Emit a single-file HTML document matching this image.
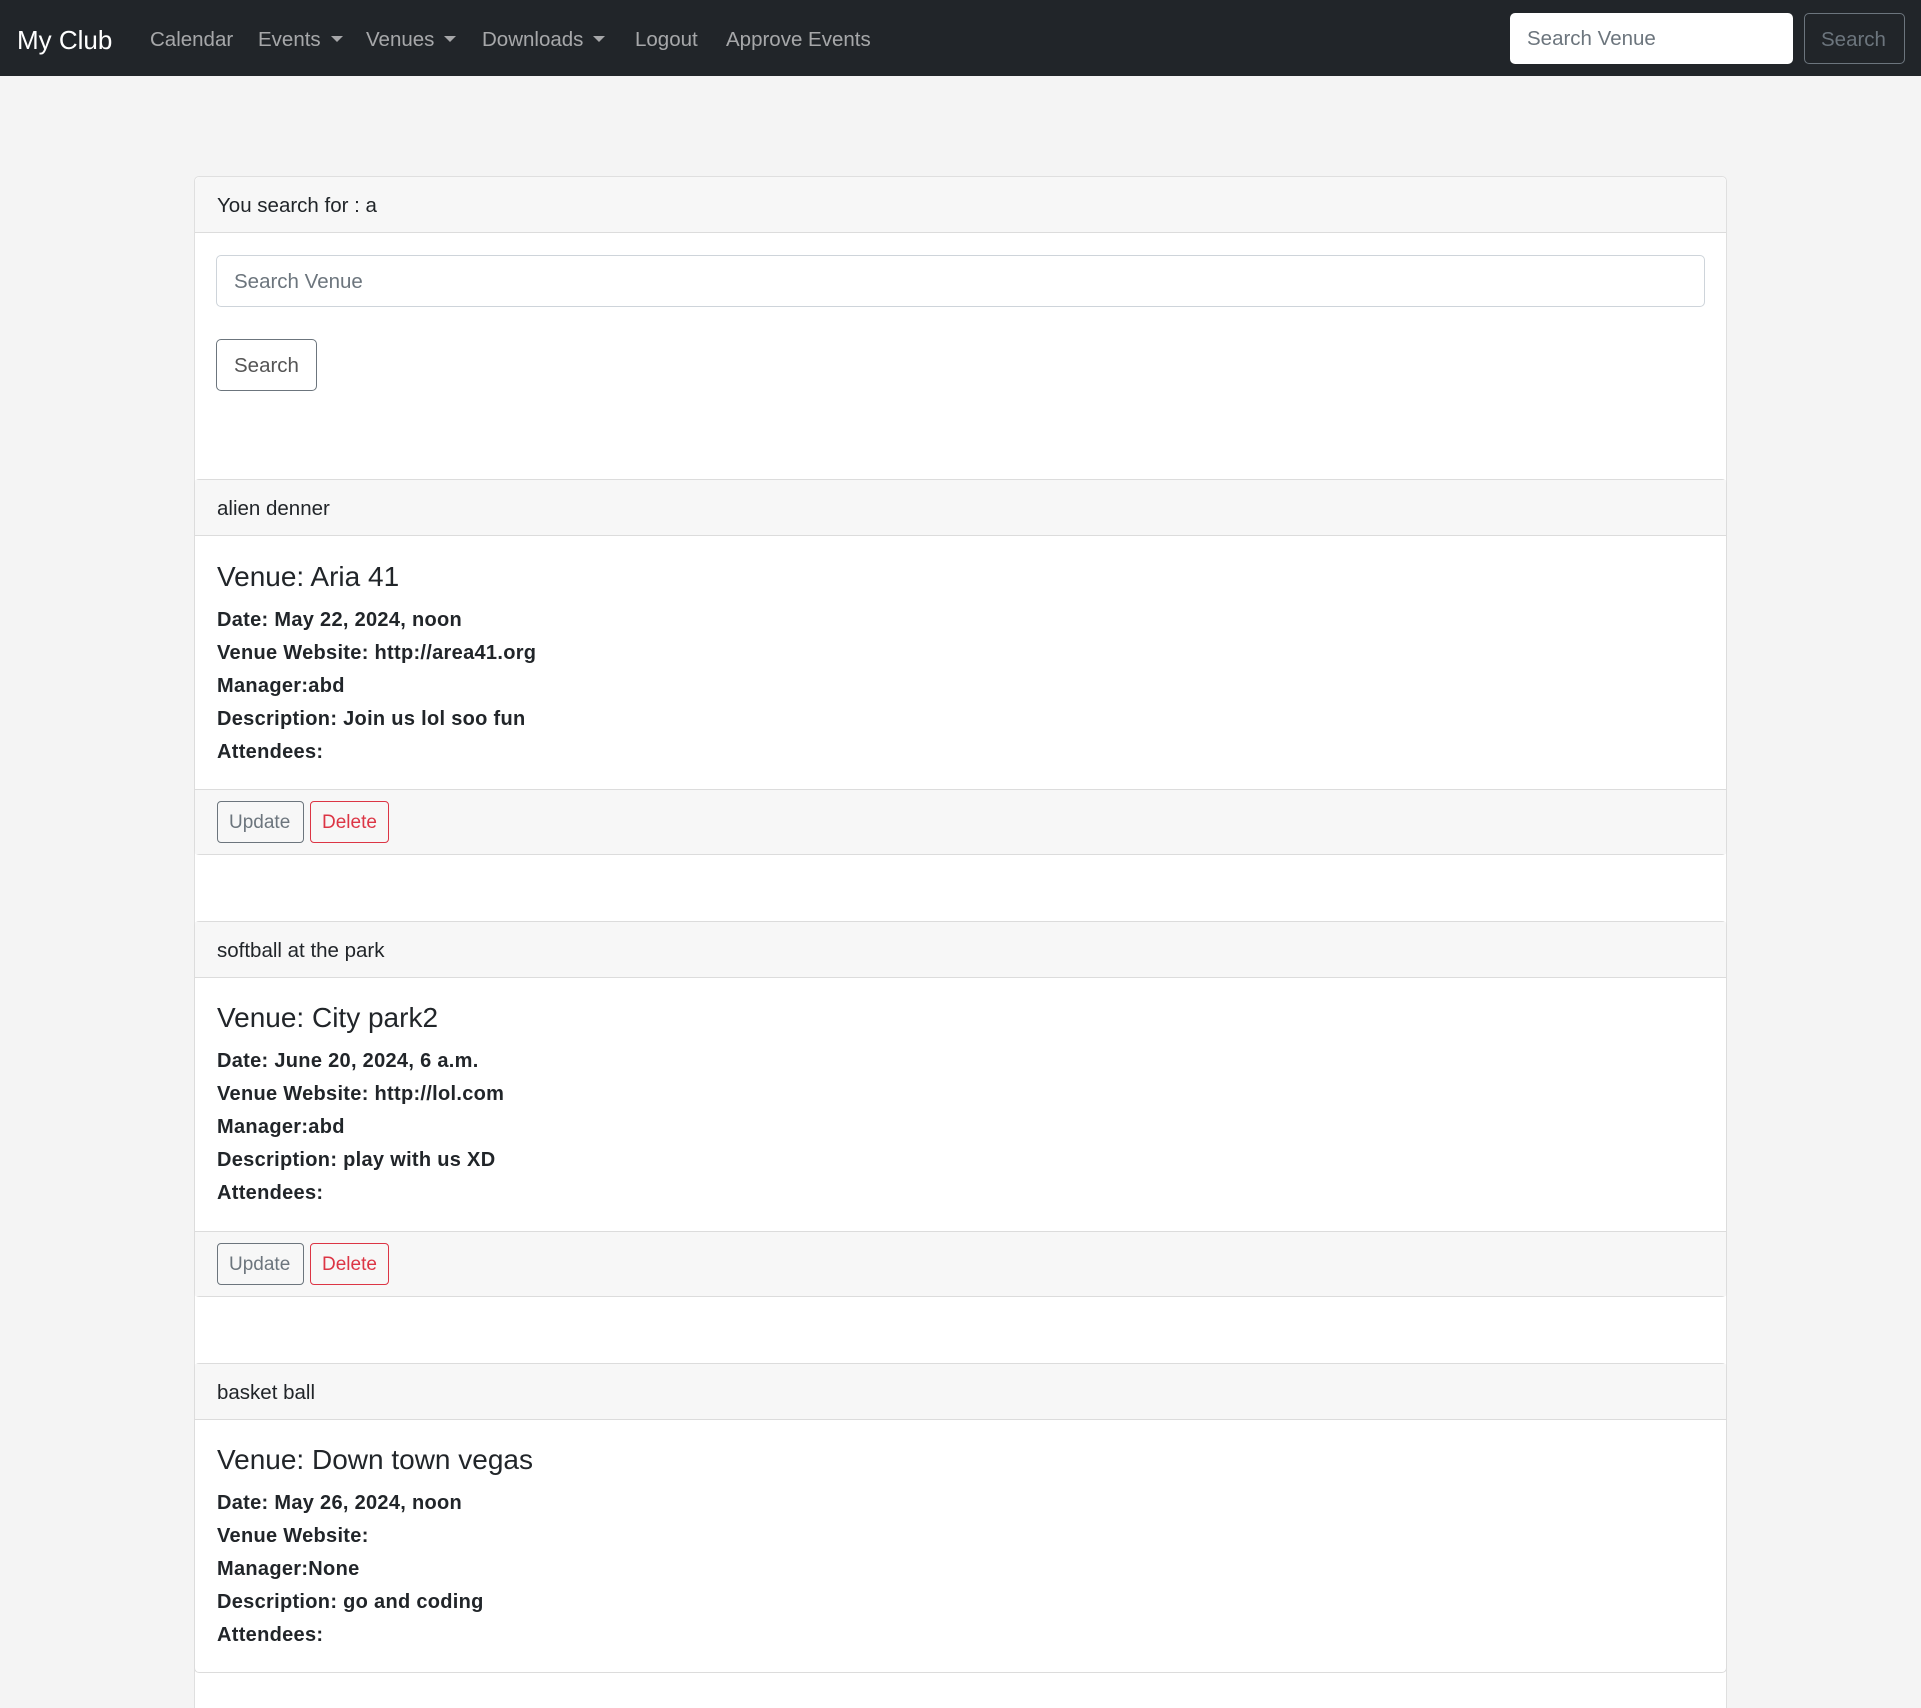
<!DOCTYPE html>
<html style="width:1921px;height:1708px;overflow:hidden"><head><meta charset="utf-8"><style>
*{box-sizing:border-box;margin:0;padding:0}
body{width:1921px;height:1708px;background:#f4f4f4;font-family:"Liberation Sans",sans-serif;color:#212529;position:relative;overflow:hidden;font-size:19.6px}
.nav{position:absolute;left:0;top:0;width:1921px;height:76px;background:#212529}
.nav span{position:absolute;top:28px;color:rgba(255,255,255,.6);font-size:20.5px;white-space:nowrap}
.nav .brand{color:#fff;font-size:26px;top:25px;left:17px}
.caret{display:inline-block;margin-left:10px;vertical-align:4px;border-top:6px solid rgba(255,255,255,.6);border-left:6px solid transparent;border-right:6px solid transparent}
.ninput{position:absolute;left:1510px;top:13px;width:283px;height:51px;background:#fff;border-radius:5px;color:#6c757d;font-size:20.5px;padding:14px 17px}
.nbtn{position:absolute;left:1804px;top:13px;width:101px;height:51px;border:1px solid #6c757d;border-radius:5px;color:#6c757d;font-size:20.5px;padding:14px 16px}
.outer{position:absolute;left:194px;top:176px;width:1533px;height:1560px;background:#fff;border:1px solid #dfdfdf;border-radius:5px}
.hdr{position:absolute;left:0;right:0;background:#f7f7f7;border-bottom:1px solid #dcdcdc;padding-left:22px;font-size:20.5px}
.card{position:absolute;left:194px;width:1533px;border:1px solid #dcdcdc;border-radius:5px;background:#fff}
.abs{position:absolute}
.title{font-size:28px;left:22px}
.b{font-weight:bold;left:22px;font-size:20px;white-space:nowrap;letter-spacing:.3px}
.btn{position:absolute;top:11px;height:42px;border-radius:4px;font-size:19px;padding:10px 11px;background:#f7f7f7}
</style></head><body>
<div class="nav">
<span class="brand">My Club</span>
<span style="left:150px">Calendar</span>
<span style="left:258px">Events<i class="caret"></i></span>
<span style="left:366px">Venues<i class="caret"></i></span>
<span style="left:482px">Downloads<i class="caret"></i></span>
<span style="left:635px">Logout</span>
<span style="left:726px">Approve Events</span>
<div class="ninput">Search Venue</div>
<div class="nbtn">Search</div>
</div>

<div class="outer">
<div class="hdr" style="top:0;height:56px;line-height:58px;border-radius:5px 5px 0 0">You search for : a</div>
<div class="abs" style="left:21px;top:78px;width:1489px;height:52px;border:1px solid #ced4da;border-radius:5px;color:#6c757d;font-size:20.5px;padding:14px 17px">Search Venue</div>
<div class="abs" style="left:21px;top:162px;width:101px;height:52px;border:1px solid #6c757d;border-radius:5px;color:#555;font-size:20.5px;padding:14px 17px">Search</div>
</div>

<div class="card" style="top:479px;height:376px">
<div class="hdr" style="top:0;height:56px;line-height:58px">alien denner</div>
<div class="abs title" style="top:81px">Venue: Aria 41</div>
<div class="abs b" style="top:129px">Date: May 22, 2024, noon</div>
<div class="abs b" style="top:162px">Venue Website: http://area41.org</div>
<div class="abs b" style="top:195px">Manager:abd</div>
<div class="abs b" style="top:228px">Description: Join us lol soo fun</div>
<div class="abs b" style="top:261px">Attendees:</div>
<div class="abs" style="left:0;right:0;top:309px;bottom:0;background:#f7f7f7;border-top:1px solid #dcdcdc">
<div class="btn" style="left:22px;width:87px;border:1px solid #6c757d;color:#6c757d">Update</div>
<div class="btn" style="left:115px;width:79px;border:1px solid #dc3545;color:#dc3545">Delete</div>
</div></div>

<div class="card" style="top:921px;height:376px">
<div class="hdr" style="top:0;height:56px;line-height:58px">softball at the park</div>
<div class="abs title" style="top:80px">Venue: City park2</div>
<div class="abs b" style="top:128px">Date: June 20, 2024, 6 a.m.</div>
<div class="abs b" style="top:161px">Venue Website: http://lol.com</div>
<div class="abs b" style="top:194px">Manager:abd</div>
<div class="abs b" style="top:227px">Description: play with us XD</div>
<div class="abs b" style="top:260px">Attendees:</div>
<div class="abs" style="left:0;right:0;top:309px;bottom:0;background:#f7f7f7;border-top:1px solid #dcdcdc">
<div class="btn" style="left:22px;width:87px;border:1px solid #6c757d;color:#6c757d">Update</div>
<div class="btn" style="left:115px;width:79px;border:1px solid #dc3545;color:#dc3545">Delete</div>
</div></div>

<div class="card" style="top:1363px;height:310px">
<div class="hdr" style="top:0;height:56px;line-height:58px">basket ball</div>
<div class="abs title" style="top:80px">Venue: Down town vegas</div>
<div class="abs b" style="top:128px">Date: May 26, 2024, noon</div>
<div class="abs b" style="top:161px">Venue Website:</div>
<div class="abs b" style="top:194px">Manager:None</div>
<div class="abs b" style="top:227px">Description: go and coding</div>
<div class="abs b" style="top:260px">Attendees:</div>
</div>
</body></html>
